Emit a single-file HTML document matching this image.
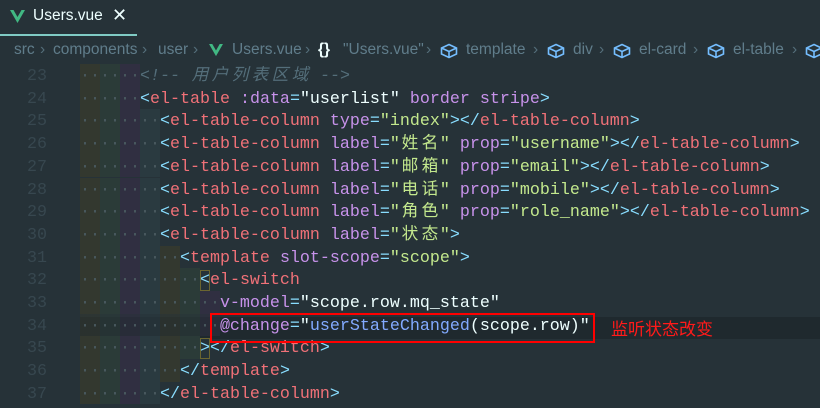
<!DOCTYPE html>
<html><head><meta charset="utf-8"><style>
*{margin:0;padding:0;box-sizing:border-box}
body{width:820px;height:408px;overflow:hidden;background:#263238;position:relative;font-family:"Liberation Sans","Noto Sans CJK SC",sans-serif}
.a{position:absolute;white-space:pre}
.bc{font-size:15.5px;color:#607d8b;top:41px}
.sep{color:#546e7a}
.code{font-family:"Liberation Mono","Noto Sans CJK SC",monospace;font-size:16.67px;line-height:22.7px}
.ln{position:absolute;left:0;width:47px;text-align:right;color:#37474f;font-family:"Liberation Mono",monospace;font-size:16.67px;line-height:22.7px}
.band{position:absolute;left:80px;height:22.7px;background:repeating-linear-gradient(90deg,#33382f 0 20px,#2b3b38 20px 40px,#302f41 40px 60px,#2a3a40 60px 80px)}
.ln2{position:absolute;left:80px;white-space:pre}
.d{color:#4a5a60}
.t{color:#f07178}.b{color:#89ddff}.p{color:#c792ea}.s{color:#c3e88d}.w{color:#eeffff}.f{color:#82aaff}.c{color:#546e7a;font-style:italic}
.k{display:inline-block;width:20px;text-align:center}
</style></head><body>
<!-- tab -->
<svg class="a" style="left:10px;top:10px" width="15" height="14" viewBox="0 0 15 14"><path d="M0 0 L7.5 13 L15 0 L11.5 0 L7.5 7 L3.5 0Z" fill="#41b883"/></svg>
<div class="a" style="left:33px;top:7px;font-size:15.5px;color:#eeffff">Users.vue</div>
<div class="a" style="left:112px;top:5px;font-size:18px;color:#eeffff">✕</div>
<div class="a" style="left:0;top:34px;width:137px;height:2px;background:#80cbc4"></div>
<!-- breadcrumb -->
<div class="a bc" style="left:14px">src</div>
<div class="a bc sep" style="left:40px">›</div>
<div class="a bc" style="left:53px">components</div>
<div class="a bc sep" style="left:142px">›</div>
<div class="a bc" style="left:158px">user</div>
<div class="a bc sep" style="left:193px">›</div>
<svg class="a" style="left:209px;top:44px" width="14" height="13" viewBox="0 0 15 14"><path d="M0 0 L7.5 13 L15 0 L11.5 0 L7.5 7 L3.5 0Z" fill="#41b883"/></svg>
<div class="a bc" style="left:232px">Users.vue</div>
<div class="a bc sep" style="left:305px">›</div>
<div class="a bc" style="left:318px;color:#eeffff;font-weight:bold">{}</div>
<div class="a bc" style="left:343px">"Users.vue"</div>
<div class="a bc sep" style="left:426px">›</div>
<svg class="a" width="0" height="0"><defs><symbol id="cube" viewBox="0 0 18 16"><path d="M9 1.5 L16.5 5 L16.5 11 L9 14.5 L1.5 11 L1.5 5Z M1.5 5 L9 8.5 L16.5 5 M9 8.5 L9 14.5" fill="none" stroke="#75beff" stroke-width="1.6"/></symbol></defs></svg>
<svg class="a" style="left:440px;top:43px" width="18" height="16"><use href="#cube"/></svg>
<div class="a bc" style="left:466px">template</div>
<div class="a bc sep" style="left:533px">›</div>
<svg class="a" style="left:547px;top:43px" width="18" height="16"><use href="#cube"/></svg>
<div class="a bc" style="left:573px">div</div>
<div class="a bc sep" style="left:599px">›</div>
<svg class="a" style="left:613px;top:43px" width="18" height="16"><use href="#cube"/></svg>
<div class="a bc" style="left:639px">el-card</div>
<div class="a bc sep" style="left:693px">›</div>
<svg class="a" style="left:707px;top:43px" width="18" height="16"><use href="#cube"/></svg>
<div class="a bc" style="left:733px">el-table</div>
<div class="a bc sep" style="left:792px">›</div>
<svg class="a" style="left:805px;top:43px" width="18" height="16"><use href="#cube"/></svg>

<!-- current line highlight -->
<div class="a" style="left:80px;top:316.8px;width:740px;height:22.7px;background:#1f292e"></div>

<!-- bands -->
<div class="band" style="top:64px;width:60px"></div>
<div class="band" style="top:86.7px;width:60px"></div>
<div class="band" style="top:109.4px;width:80px"></div>
<div class="band" style="top:132.1px;width:80px"></div>
<div class="band" style="top:154.8px;width:80px"></div>
<div class="band" style="top:177.5px;width:80px"></div>
<div class="band" style="top:200.2px;width:80px"></div>
<div class="band" style="top:222.9px;width:80px"></div>
<div class="band" style="top:245.6px;width:100px"></div>
<div class="band" style="top:268.3px;width:120px"></div>
<div class="band" style="top:291px;width:140px"></div>
<div class="band" style="top:313.7px;width:140px;opacity:.55"></div>
<div class="band" style="top:336.4px;width:120px"></div>
<div class="band" style="top:359.1px;width:100px"></div>
<div class="band" style="top:381.8px;width:80px"></div>

<!-- bracket match boxes -->
<div class="a" style="left:200px;top:270px;width:10px;height:21px;border:1px solid #6b6530"></div>
<div class="a" style="left:200px;top:338px;width:10px;height:21px;border:1px solid #6b6530"></div>

<!-- line numbers -->
<div class="ln" style="top:66px">23<br>24<br>25<br>26<br>27<br>28<br>29<br>30<br>31<br>32<br>33<br>34<br>35<br>36<br>37</div>

<div class="ln2 code" style="top:66px"><span class="d">······</span><span class="c">&lt;!-- <span class="k">用</span><span class="k">户</span><span class="k">列</span><span class="k">表</span><span class="k">区</span><span class="k">域</span> --&gt;</span>
<span class="d">······</span><span class="b">&lt;</span><span class="t">el-table</span> <span class="p">:data</span><span class="b">=</span><span class="w">"userlist"</span> <span class="p">border stripe</span><span class="b">&gt;</span>
<span class="d">········</span><span class="b">&lt;</span><span class="t">el-table-column</span> <span class="p">type</span><span class="b">=</span><span class="s">"index"</span><span class="b">&gt;&lt;/</span><span class="t">el-table-column</span><span class="b">&gt;</span>
<span class="d">········</span><span class="b">&lt;</span><span class="t">el-table-column</span> <span class="p">label</span><span class="b">=</span><span class="s">"<span class="k">姓</span><span class="k">名</span>"</span> <span class="p">prop</span><span class="b">=</span><span class="s">"username"</span><span class="b">&gt;&lt;/</span><span class="t">el-table-column</span><span class="b">&gt;</span>
<span class="d">········</span><span class="b">&lt;</span><span class="t">el-table-column</span> <span class="p">label</span><span class="b">=</span><span class="s">"<span class="k">邮</span><span class="k">箱</span>"</span> <span class="p">prop</span><span class="b">=</span><span class="s">"email"</span><span class="b">&gt;&lt;/</span><span class="t">el-table-column</span><span class="b">&gt;</span>
<span class="d">········</span><span class="b">&lt;</span><span class="t">el-table-column</span> <span class="p">label</span><span class="b">=</span><span class="s">"<span class="k">电</span><span class="k">话</span>"</span> <span class="p">prop</span><span class="b">=</span><span class="s">"mobile"</span><span class="b">&gt;&lt;/</span><span class="t">el-table-column</span><span class="b">&gt;</span>
<span class="d">········</span><span class="b">&lt;</span><span class="t">el-table-column</span> <span class="p">label</span><span class="b">=</span><span class="s">"<span class="k">角</span><span class="k">色</span>"</span> <span class="p">prop</span><span class="b">=</span><span class="s">"role_name"</span><span class="b">&gt;&lt;/</span><span class="t">el-table-column</span><span class="b">&gt;</span>
<span class="d">········</span><span class="b">&lt;</span><span class="t">el-table-column</span> <span class="p">label</span><span class="b">=</span><span class="s">"<span class="k">状</span><span class="k">态</span>"</span><span class="b">&gt;</span>
<span class="d">··········</span><span class="b">&lt;</span><span class="t">template</span> <span class="p">slot-scope</span><span class="b">=</span><span class="s">"scope"</span><span class="b">&gt;</span>
<span class="d">············</span><span class="b">&lt;</span><span class="t">el-switch</span>
<span class="d">··············</span><span class="p">v-model</span><span class="b">=</span><span class="w">"scope.row.mq_state"</span>
<span class="d">··············</span><span class="p">@change</span><span class="b">=</span><span class="w">"</span><span class="f">userStateChanged</span><span class="w">(scope.row)"</span>
<span class="d">············</span><span class="b">&gt;&lt;/</span><span class="t">el-switch</span><span class="b">&gt;</span>
<span class="d">··········</span><span class="b">&lt;/</span><span class="t">template</span><span class="b">&gt;</span>
<span class="d">········</span><span class="b">&lt;/</span><span class="t">el-table-column</span><span class="b">&gt;</span></div>

<!-- annotation -->
<div class="a" style="left:210px;top:313px;width:385px;height:30px;border:2px solid #ff0000"></div>
<div class="a" style="left:611px;top:315px;font-size:17px;color:#ff1a1a;font-family:'Noto Sans CJK SC',sans-serif">监听状态改变</div>
</body></html>
